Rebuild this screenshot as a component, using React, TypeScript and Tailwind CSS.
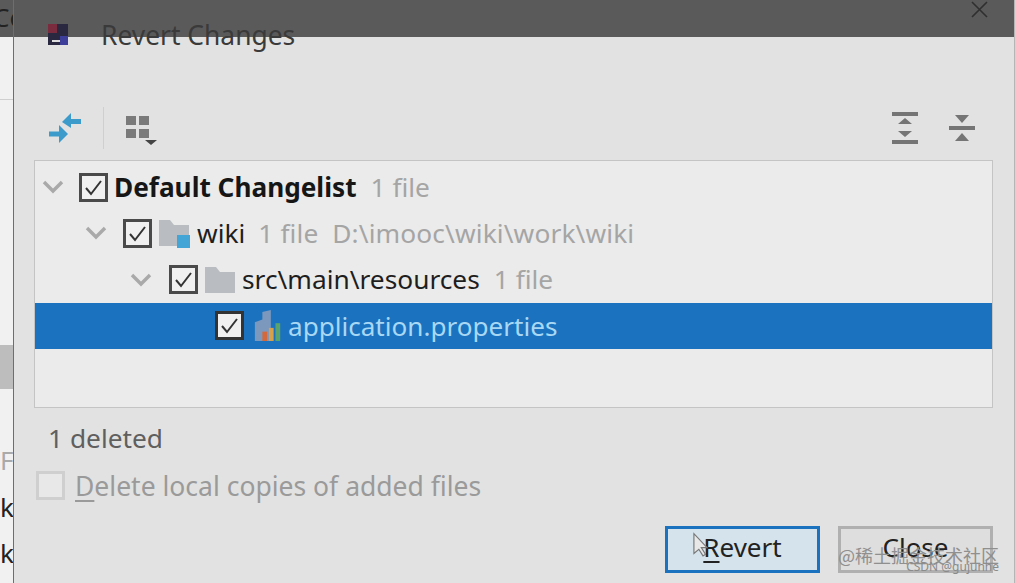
const font = "font-['Noto_Sans','Open_Sans',sans-serif]"

function Check({ className = "" }: { className?: string }) {
  return (
    <span className={`flex h-[29px] w-[29px] shrink-0 items-center justify-center border-[3px] border-[#4a4a4a] bg-[#f0f0f0] ${className}`}>
      <svg width="21" height="21" viewBox="0 0 21 21" fill="none">
        <path d="M3 11l5 6L18 4" stroke="#333" strokeWidth="2" />
      </svg>
    </span>
  )
}

function Chevron() {
  return (
    <svg width="22" height="14" viewBox="0 0 22 14" fill="none" className="shrink-0">
      <path d="M2 2l9 9 9-9" stroke="#a9a9a9" strokeWidth="3.4" />
    </svg>
  )
}

function Folder({ badge }: { badge?: boolean }) {
  return (
    <svg width="32" height="30" viewBox="0 0 32 30" className="ml-[6px] shrink-0">
      <path d="M1 2h11l4 5h15v21H1z" fill="#b9bcc0" />
      {badge && <rect x="19" y="17" width="13" height="13" fill="#43a4d6" />}
    </svg>
  )
}

function PropsIcon() {
  return (
    <svg width="30" height="36" viewBox="0 0 32 36" className="ml-[9px] shrink-0">
      <path d="M2 14l8-3v-8l9-2v33H2z" fill="#7d98bd" />
      <rect x="10" y="24" width="5" height="10" fill="#d4683a" />
      <rect x="17" y="20" width="5" height="14" fill="#d7a04a" />
      <rect x="24" y="15" width="5" height="19" fill="#5aa36a" />
    </svg>
  )
}

function Row({ indent, children, selected }: { indent: string; children: React.ReactNode; selected?: boolean }) {
  return (
    <div className={`flex h-[46.25px] items-center ${indent} ${selected ? "bg-[#1b73bf]" : ""}`}>
      {children}
    </div>
  )
}

export default function App() {
  return (
    <div className={`relative flex h-[583px] w-[1015px] overflow-hidden bg-[#e2e2e2] ${font}`}>
      {/* dimmed title band of the window behind */}
      <div className="absolute inset-x-0 top-0 h-[37px] bg-[#5a5a5a]" />

      {/* sliver of the IDE behind the dialog */}
      <div className="flex w-[13px] shrink-0 flex-col overflow-hidden bg-[#f1f1f1] text-[26px] leading-none text-[#222]">
        <span className="relative mt-[4px] -ml-[7px] whitespace-nowrap text-[#222]">Co</span>
        <div className="mt-[69px] h-px bg-[#cfcfcf]" />
        <div className="mt-[245px] h-[44px] bg-[#bdbdbd]" />
        <span className="mt-[58px] whitespace-nowrap text-[#aaa]">Fi</span>
        <span className="mt-[21px]">k</span>
        <span className="mt-[20px]">k</span>
      </div>
      <div className="z-10 w-px shrink-0 bg-[#6e6e6e]" />

      <div className="relative flex min-w-0 flex-1 flex-col border-r border-[#b5b5b5]">
        {/* title */}
        <div className="relative flex h-[70px] items-center pl-[33px]">
          <svg width="22" height="24" viewBox="0 0 22 24" className="shrink-0">
            <rect x="1" y="1" width="20" height="21" fill="#2a2740" />
            <rect x="1" y="1" width="9" height="9" fill="#7a2b3e" />
            <rect x="13" y="13" width="8" height="9" fill="#3d3d9a" />
            <rect x="5" y="17" width="8" height="2" fill="#ddd" />
          </svg>
          <span className="ml-[32px] text-[26.4px] leading-none text-[#3a3a3a]">Revert Changes</span>
          <svg width="17" height="17" viewBox="0 0 17 17" className="absolute top-[1px] right-[26px]">
            <path d="M1 1l15 15M16 1L1 16" stroke="#2f2f2f" strokeWidth="1.6" />
          </svg>
        </div>

        {/* toolbar */}
        <div className="mt-[32px] flex h-[52px] items-center pr-[38px] pl-[35px]">
          <svg width="34" height="34" viewBox="0 0 34 34">
            <g fill="#3d9bcb">
              <path d="M13 11l9-9v15z" />
              <rect x="22" y="8" width="10" height="5" />
              <path d="M10 14v18l9-9z" />
              <rect x="0" y="20.5" width="10" height="5" />
            </g>
          </svg>
          <div className="ml-[20px] h-[42px] w-px bg-[#cfcfcf]" />
          <svg width="36" height="34" viewBox="0 0 36 34" className="ml-[20px]">
            <g fill="#7a7a7a">
              <rect x="2" y="5" width="10" height="9" />
              <rect x="15" y="5" width="10" height="9" />
              <rect x="2" y="18" width="10" height="9" />
              <rect x="15" y="18" width="10" height="9" />
            </g>
            <path d="M21 29h12l-6 5z" fill="#444" />
          </svg>
          <div className="flex-1" />
          <svg width="28" height="34" viewBox="0 0 28 34">
            <g fill="#757575">
              <rect x="1" y="1" width="26" height="4" />
              <rect x="1" y="29" width="26" height="4" />
              <path d="M7 13l7-6 7 6zM7 20h14l-7 6z" />
            </g>
          </svg>
          <svg width="28" height="30" viewBox="0 0 28 30" className="ml-[29px]">
            <g fill="#757575">
              <rect x="1" y="13" width="26" height="4" />
              <path d="M7 2h14l-7 8zM7 28h14l-7-8z" />
            </g>
          </svg>
        </div>

        {/* tree */}
        <div className="mt-[6px] mr-[21px] ml-[20px] flex h-[248px] flex-col border border-[#c4c4c4] bg-[#ebebeb] pt-[3px] text-[26.3px] text-[#1e1e1e]">
          <Row indent="pl-[7px]">
            <Chevron />
            <Check className="ml-[15px]" />
            <span className="ml-[6px] text-[26.2px] leading-none font-bold whitespace-nowrap text-[#161616]">Default Changelist</span>
            <span className="ml-[14px] leading-none whitespace-nowrap text-[#a5a5a5]">1 file</span>
          </Row>
          <Row indent="pl-[50px]">
            <Chevron />
            <Check className="ml-[16px]" />
            <Folder badge />
            <span className="ml-[7px] leading-none">wiki</span>
            <span className="ml-[13px] leading-none tracking-[0.12px] whitespace-pre text-[#a5a5a5]">1 file  D:\imooc\wiki\work\wiki</span>
          </Row>
          <Row indent="pl-[95px]">
            <Chevron />
            <Check className="ml-[17px]" />
            <Folder />
            <span className="ml-[6px] leading-none whitespace-nowrap">src\main\resources</span>
            <span className="ml-[14px] leading-none whitespace-nowrap text-[#a5a5a5]">1 file</span>
          </Row>
          <Row indent="pl-[180px]" selected>
            <Check className="border-[#333]" />
            <PropsIcon />
            <span className="ml-[5px] text-[26.1px] leading-none whitespace-nowrap text-[#a9d8f5]">application.properties</span>
          </Row>
        </div>

        <div className="mt-[17px] ml-[34px] text-[26.3px] leading-none text-[#5f5f5f]">1 deleted</div>

        <div className="mt-[20px] ml-[22px] flex items-center">
          <span className="h-[29px] w-[29px] border-[3px] border-[#cfcfcf] bg-[#e8e8e8]" />
          <span className="ml-[10px] text-[26.5px] leading-none text-[#9a9a9a]">
            <span className="underline underline-offset-4">D</span>elete local copies of added files
          </span>
        </div>

        {/* buttons */}
        <div className="mt-[26px] flex justify-end gap-[18px] pr-[21px]">
          <div className="relative flex h-[47px] w-[155px] items-center justify-center border-[3px] border-[#1b73bf] bg-[#d5e3ec] pb-[5px] text-[26px] leading-none text-[#222]">
            <span><span className="underline underline-offset-4">R</span>evert</span>
            <svg width="17" height="28" viewBox="0 0 20 34" className="absolute top-[3px] left-[24px]">
              <path d="M2 2v24l6-5 5 8 3-2-5-8h7z" fill="#e8e8e8" stroke="#777" strokeWidth="1.4" />
            </svg>
          </div>
          <div className="relative flex h-[47px] w-[155px] items-center justify-center border-[3px] border-[#b0b0b0] bg-[#dedede] pb-[5px] text-[26px] leading-none text-[#222]">
            Close
          </div>
        </div>

        {/* watermarks */}
        <span className="absolute right-[15px] bottom-[19px] font-['Noto_Sans_CJK_SC',sans-serif] text-[18px] leading-none text-[#8f8f8f]">@稀土掘金技术社区</span>
        <span className="absolute right-[15px] bottom-[10px] text-[12px] leading-none text-[#8a8a8a]">CSDN @gujunhe</span>
      </div>
    </div>
  )
}
